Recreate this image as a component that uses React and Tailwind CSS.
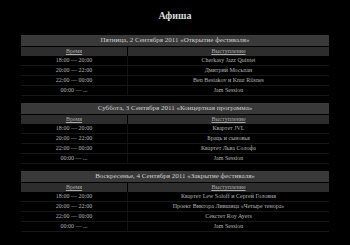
import React from 'react';

const sections = [
  {
    title: 'Пятница, 2 Сентября 2011 «Открытие фестиваля»',
    rows: [
      ['18:00 — 20:00', 'Cherkasy Jazz Quintet'],
      ['20:00 — 22:00', 'Дмитрий Мосьпан'],
      ['22:00 — 00:00', 'Ben Besiakov и Knut Riisnes'],
      ['00:00 — ...', 'Jam Session'],
    ],
  },
  {
    title: 'Суббота, 3 Сентября 2011 «Концертная программа»',
    rows: [
      ['18:00 — 20:00', 'Квартет JVL'],
      ['20:00 — 22:00', 'Браць и сыновья'],
      ['22:00 — 00:00', 'Квартет Льва Солофа'],
      ['00:00 — ...', 'Jam Session'],
    ],
  },
  {
    title: 'Воскресенье, 4 Сентября 2011 «Закрытие фестиваля»',
    rows: [
      ['18:00 — 20:00', 'Квартет Lew Soloff и Сергей Головня'],
      ['20:00 — 22:00', 'Проект Виктора Лившица «Четыре тенора»'],
      ['22:00 — 00:00', 'Секстет Roy Ayers'],
      ['00:00 — ...', 'Jam Session'],
    ],
  },
];

const App = () => {
  return (
    <div
      className="w-[350px] h-[245px] bg-black overflow-hidden"
      style={{ fontFamily: '"Liberation Serif", "DejaVu Serif", serif' }}
    >
      {/* Title */}
      <h1 className="pt-[11px] h-[35px] text-center text-[10px] leading-[10px] font-bold text-[#dcdcdc]">
        Афиша
      </h1>

      <div className="mx-[21px] w-[308px]">
        {sections.map((s) => (
          <div key={s.title} className="mb-[7px]">
            {/* Day header */}
            <div className="h-[11px] bg-[#393939] flex items-center justify-center text-[7px] text-[#cfcfcf]">
              {s.title}
            </div>
            {/* Column header */}
            <div className="mt-px grid grid-cols-[106px_1fr] gap-px h-[9px]">
              <div className="bg-[#2d2d2d] flex items-center justify-center text-[6px] text-[#a8a8a8] underline">
                Время
              </div>
              <div className="bg-[#2d2d2d] flex items-center justify-center text-[6px] text-[#a8a8a8] underline">
                Выступление
              </div>
            </div>
            {/* Rows */}
            {s.rows.map(([time, act]) => (
              <div key={time} className="grid grid-cols-[107px_1fr] h-[10px] border-b border-[#171717] text-[6px] text-[#b4b4b4]">
                <div className="flex items-center justify-center border-r border-[#111111]">{time}</div>
                <div className="flex items-center justify-center">{act}</div>
              </div>
            ))}
          </div>
        ))}
      </div>
    </div>
  );
};

export default App;
